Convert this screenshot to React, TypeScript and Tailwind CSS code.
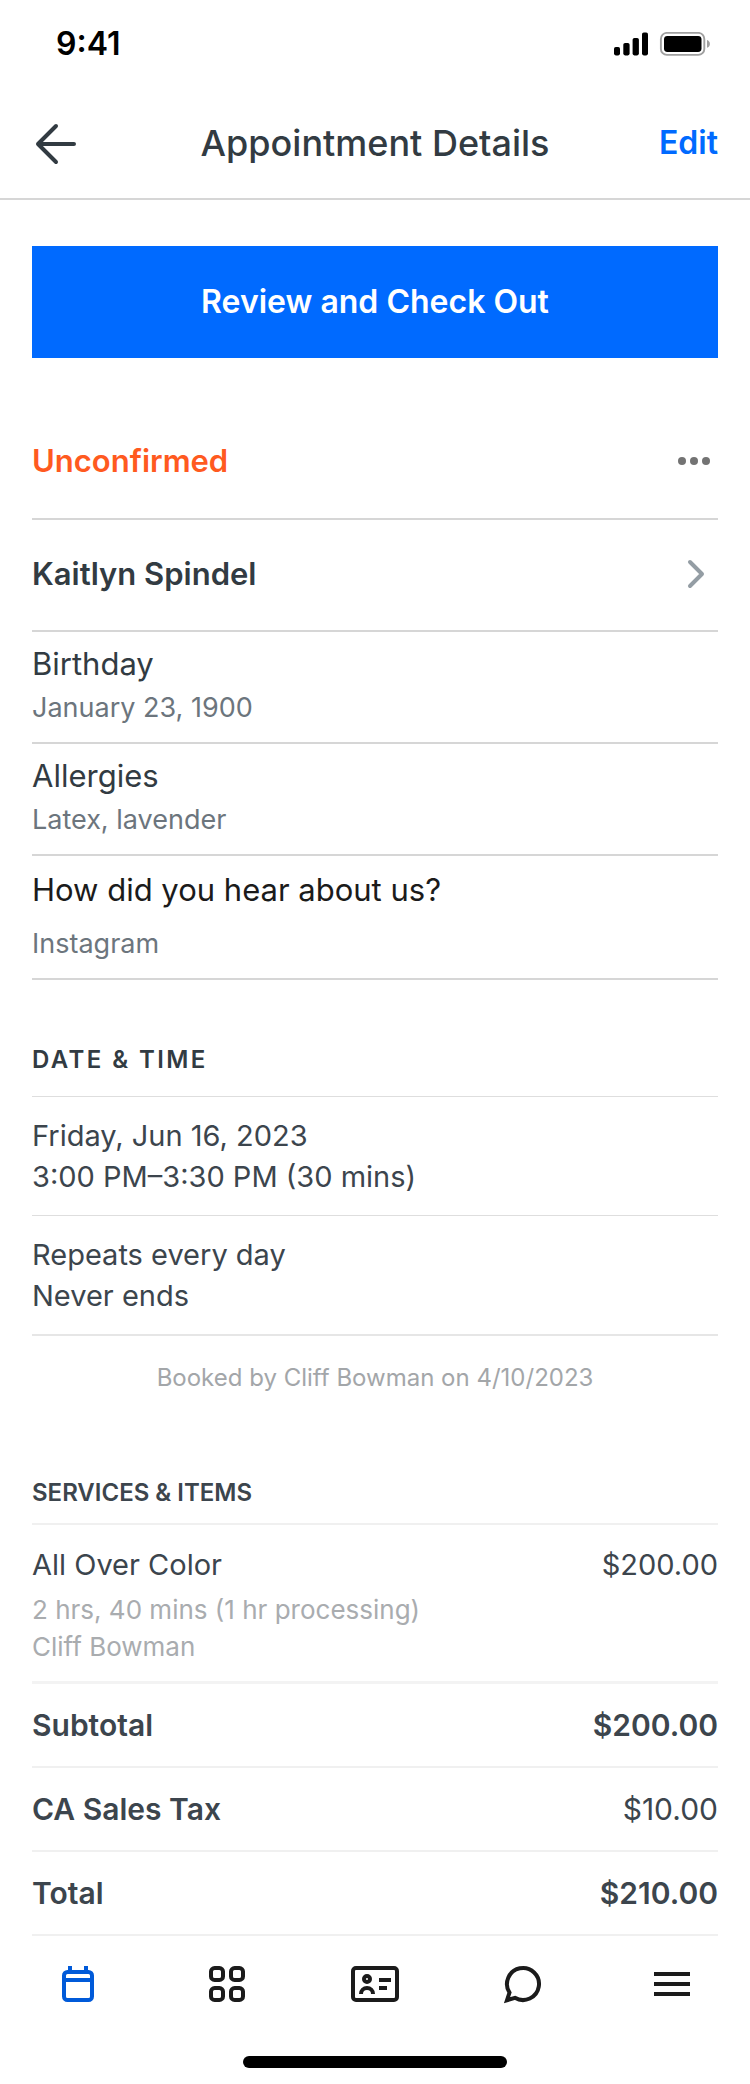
import type { ReactNode } from 'react';

function StatusBar() {
  return (
    <div className="flex h-[88px] items-center justify-between pr-10 pl-14 text-[32px] font-semibold text-black">
      <span>9:41</span>
      <svg width="96" height="24" viewBox="0 0 96 24" role="img" aria-label="Signal and battery">
        <rect x="0" y="15" width="6" height="8.4" rx="1.8" />
        <rect x="9.3" y="11" width="6.3" height="12.4" rx="1.8" />
        <rect x="18.6" y="6" width="6.3" height="17.4" rx="1.8" />
        <rect x="28" y="0.5" width="6" height="22.9" rx="1.8" />
        <rect x="46.9" y="0.9" width="43.4" height="22" rx="6" fill="none" stroke="#a0a0a0" strokeWidth="1.9" />
        <rect x="50" y="4" width="37.5" height="16" rx="3.4" />
        <path d="M93 8v7.8c1.7-.6 2.9-2.1 2.9-3.9S94.7 8.6 93 8z" fill="#a0a0a0" />
      </svg>
    </div>
  );
}

function Field({ label, value }: { label: string; value: string }) {
  return (
    <div className="flex flex-col gap-1 border-b-2 border-[#d6d6d6] pt-2.5 pb-4">
      <dt className="text-[31px] leading-[44px] text-[#323b42]">{label}</dt>
      <dd className="text-[27px] leading-[36px] text-[#6c757d]">{value}</dd>
    </div>
  );
}

function TotalRow({ label, amount, regular }: { label: string; amount: string; regular?: boolean }) {
  return (
    <div className="flex h-[84px] items-center justify-between border-b-2 border-[#f0f0f0]">
      <dt className="text-[30px] font-semibold">{label}</dt>
      <dd className={regular ? 'text-[30px] font-normal' : 'text-[30px] font-semibold'}>{amount}</dd>
    </div>
  );
}

function Tab({ label, active, children }: { label: string; active?: boolean; children: ReactNode }) {
  return (
    <a
      href="#"
      aria-label={label}
      className={active ? 'flex flex-1 justify-center text-[#005ad9]' : 'flex flex-1 justify-center text-[#1b1b1b]'}
    >
      <svg width="48" height="48" viewBox="0 0 48 48" fill="none" stroke="currentColor" strokeWidth="4">
        {children}
      </svg>
    </a>
  );
}

export default function App() {
  return (
    <div className="min-h-screen bg-white font-['Inter','Liberation_Sans',sans-serif] text-[#3c454d]">
      <StatusBar />

      <header className="grid h-28 grid-cols-[1fr_auto_1fr] items-center border-b-2 border-[#d6d6d6] px-8 text-[#323b42]">
        <button type="button" aria-label="Back" className="justify-self-start">
          <svg width="48" height="48" viewBox="0 0 48 48" fill="none" stroke="currentColor" strokeWidth="4" strokeLinecap="round" strokeLinejoin="round">
            <path d="M42 25H6M24 7L6 25l18 18" />
          </svg>
        </button>
        <h1 className="text-[36px] font-medium">Appointment Details</h1>
        <button type="button" className="justify-self-end text-[32px] font-semibold text-[#006aff]">
          Edit
        </button>
      </header>

      <main>
        <div className="px-8 pt-[46px]">
          <button type="button" className="h-28 w-full bg-[#006aff] text-[32px] font-semibold text-white">
            Review and Check Out
          </button>
        </div>

        <section className="mt-12 px-8">
          <div className="flex h-[114px] items-center justify-between border-b-2 border-[#d6d6d6] pb-0.5">
            <span className="text-[31px] font-semibold text-[#ff5a1f]">Unconfirmed</span>
            <button type="button" aria-label="More options">
              <svg width="48" height="48" viewBox="0 0 48 48" fill="#737373">
                <circle cx="12" cy="24" r="4" />
                <circle cx="24" cy="24" r="4" />
                <circle cx="36" cy="24" r="4" />
              </svg>
            </button>
          </div>
          <a href="#" className="flex h-28 items-center justify-between border-b-2 border-[#d6d6d6] pb-0.5">
            <span className="text-[31px] font-semibold text-[#323b42]">Kaitlyn Spindel</span>
            <svg width="48" height="48" viewBox="0 0 48 48" fill="none" stroke="#949da4" strokeWidth="4" strokeLinecap="round" strokeLinejoin="round">
              <path d="M18 12l12 12-12 12" transform="translate(2 0)" />
            </svg>
          </a>
          <dl>
            <Field label="Birthday" value="January 23, 1900" />
            <Field label="Allergies" value="Latex, lavender" />
            <div className="flex flex-col gap-3.5 border-b-2 border-[#d6d6d6] pt-3 pb-4">
              <dt className="text-[31px] leading-[44px] text-[#1b1b1b]">How did you hear about us?</dt>
              <dd className="text-[27px] leading-[36px] text-[#6c757d]">Instagram</dd>
            </div>
          </dl>
        </section>

        <section className="mt-16 px-8">
          <h2 className="border-b border-[#dedede] pb-5 text-[24px] leading-[32px] font-semibold tracking-widest text-[#323b42]">
            DATE &amp; TIME
          </h2>
          <div className="border-b border-[#dedede] py-[18px] text-[29px] leading-[41px]">
            <p>Friday, Jun 16, 2023</p>
            <p>3:00 PM–3:30 PM (30 mins)</p>
          </div>
          <div className="border-b-2 border-[#e6e6e6] py-[18px] text-[29px] leading-[41px]">
            <p>Repeats every day</p>
            <p>Never ends</p>
          </div>
          <p className="mt-6 text-center text-[24px] leading-[36px] text-[#a3a6a9]">
            Booked by Cliff Bowman on 4/10/2023
          </p>
        </section>

        <section className="mt-[81px] px-8">
          <h2 className="border-b-2 border-[#f0f0f0] pb-3.5 text-[24px] leading-[32px] font-semibold">
            SERVICES &amp; ITEMS
          </h2>
          <dl>
            <div className="flex justify-between border-b-[3px] border-[#f3f3f3] pt-5 pb-4">
              <dt>
                <p className="text-[29px] leading-[40px]">All Over Color</p>
                <p className="mt-1.5 text-[26px] leading-[37px] text-[#a9acaf]">2 hrs, 40 mins (1 hr processing)</p>
                <p className="text-[26px] leading-[37px] text-[#a9acaf]">Cliff Bowman</p>
              </dt>
              <dd className="text-[29px] leading-[40px]">$200.00</dd>
            </div>
            <TotalRow label="Subtotal" amount="$200.00" />
            <TotalRow label="CA Sales Tax" amount="$10.00" regular />
            <TotalRow label="Total" amount="$210.00" />
          </dl>
        </section>
      </main>

      <nav aria-label="Main" className="flex h-24 items-center px-1">
        <Tab label="Calendar" active>
          <rect x="10" y="12" width="28" height="28" rx="3.5" />
          <path d="M10 20h28M16 6v5M32 6v5" />
        </Tab>
        <Tab label="Apps">
          <rect x="8" y="8" width="12" height="12" rx="3.6" />
          <rect x="28" y="8" width="12" height="12" rx="3.6" />
          <rect x="8" y="28" width="12" height="12" rx="3.6" />
          <rect x="28" y="28" width="12" height="12" rx="3.6" />
        </Tab>
        <Tab label="Customers">
          <rect x="2" y="8" width="44" height="32" rx="3" />
          <circle cx="16" cy="19" r="3" />
          <path d="M10 34c0-3.3 2.7-6 6-6s6 2.7 6 6M28 20h12M28 28h8" />
        </Tab>
        <Tab label="Messages">
          <path d="M15.9 37.8A16 16 0 1 0 10.5 32.6L8 40.2Z" />
        </Tab>
        <Tab label="More">
          <path d="M6 14h36M6 24h36M6 34h36" />
        </Tab>
      </nav>
      <div className="flex justify-center pt-6 pb-4">
        <div className="h-3 w-[264px] rounded-full bg-black" />
      </div>
    </div>
  );
}
